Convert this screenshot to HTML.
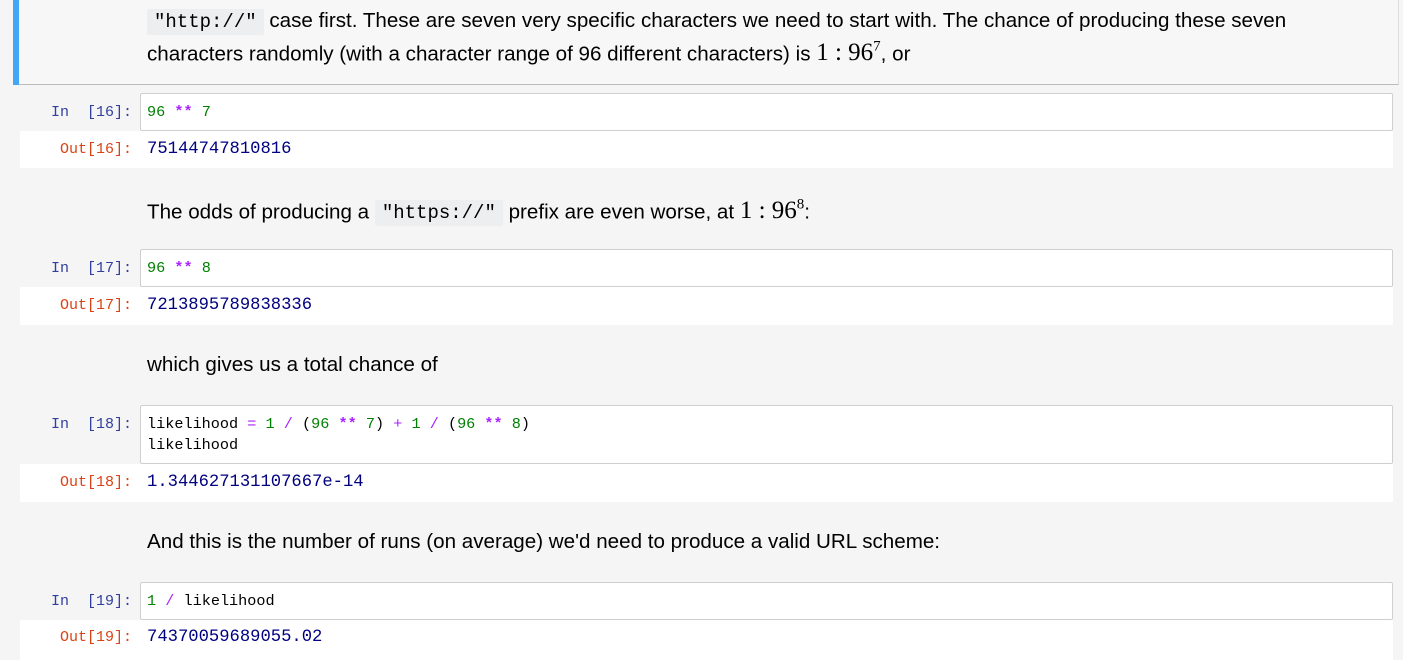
<!DOCTYPE html>
<html><head><meta charset="utf-8"><style>
body{margin:0;width:1403px;height:653px;background:#f5f5f5;position:relative;overflow:hidden;font-family:"Liberation Sans",sans-serif}
.a{position:absolute}
.md{position:absolute;left:147px;font-size:20.6px;color:#000;white-space:nowrap}
code{font-family:"Liberation Mono",monospace;background:#eceeef;padding:2px 7px;border-radius:2px;font-size:19px}
.m{font-family:"Liberation Serif",serif;font-size:25px}
.inb{position:absolute;left:140px;width:1251px;background:#fff;border:1px solid #cfcfcf;border-radius:2px}
.out{position:absolute;left:20px;width:1373px;background:#fff}
.p{position:absolute;width:132px;text-align:right;left:0;font-family:"Liberation Mono",monospace;font-size:15px;white-space:pre}
.pi{color:#303f9f}.po{color:#d84315}
.code{position:absolute;left:147px;font-family:"Liberation Mono",monospace;font-size:15.2px;white-space:pre;color:#000;line-height:21px}
.res{position:absolute;left:147px;font-family:"Liberation Mono",monospace;font-size:17.2px;color:#000080;white-space:pre}
.g{color:#008000}.k{color:#aa22ff;font-weight:bold}.o{color:#aa22ff}
</style></head><body>
<div class="a" style="left:13px;top:0;width:1385px;height:84px;background:#f7f7f7;border-bottom:1px solid #bbb;border-right:1px solid #ddd"></div>
<div class="a" style="left:13px;top:0;width:6px;height:85px;background:#42a5f5"></div>
<div class="md" style="top:9px"><code>"http://"</code> case first. These are seven very specific characters we need to start with. The chance of producing these seven</div>
<div class="md" style="top:39px">characters randomly (with a character range of 96 different characters) is <span class="m">1 : 96<sup style="font-size:15px">7</sup></span>, or</div>

<div class="inb" style="top:93px;height:36px"></div>
<div class="p pi" style="top:104px">In  [16]:</div>
<div class="code" style="top:102px"><span class="g">96</span> <span class="k">**</span> <span class="g">7</span></div>
<div class="out" style="top:131px;height:37px"></div>
<div class="p po" style="top:141px">Out[16]:</div>
<div class="res" style="top:140px">75144747810816</div>

<div class="md" style="top:197px">The odds of producing a <code>"https://"</code> prefix are even worse, at <span class="m">1 : 96<sup style="font-size:15px">8</sup></span>:</div>

<div class="inb" style="top:249px;height:36px"></div>
<div class="p pi" style="top:260px">In  [17]:</div>
<div class="code" style="top:258px"><span class="g">96</span> <span class="k">**</span> <span class="g">8</span></div>
<div class="out" style="top:287px;height:38px"></div>
<div class="p po" style="top:297px">Out[17]:</div>
<div class="res" style="top:296px">7213895789838336</div>

<div class="md" style="top:353px">which gives us a total chance of</div>

<div class="inb" style="top:405px;height:57px"></div>
<div class="p pi" style="top:416px">In  [18]:</div>
<div class="code" style="top:414px">likelihood <span class="o">=</span> <span class="g">1</span> <span class="o">/</span> (<span class="g">96</span> <span class="k">**</span> <span class="g">7</span>) <span class="o">+</span> <span class="g">1</span> <span class="o">/</span> (<span class="g">96</span> <span class="k">**</span> <span class="g">8</span>)
likelihood</div>
<div class="out" style="top:464px;height:38px"></div>
<div class="p po" style="top:474px">Out[18]:</div>
<div class="res" style="top:473px">1.344627131107667e-14</div>

<div class="md" style="top:530px">And this is the number of runs (on average) we'd need to produce a valid URL scheme:</div>

<div class="inb" style="top:582px;height:36px"></div>
<div class="p pi" style="top:593px">In  [19]:</div>
<div class="code" style="top:591px"><span class="g">1</span> <span class="o">/</span> likelihood</div>
<div class="out" style="top:620px;height:40px"></div>
<div class="p po" style="top:629px">Out[19]:</div>
<div class="res" style="top:628px">74370059689055.02</div>
</body></html>
